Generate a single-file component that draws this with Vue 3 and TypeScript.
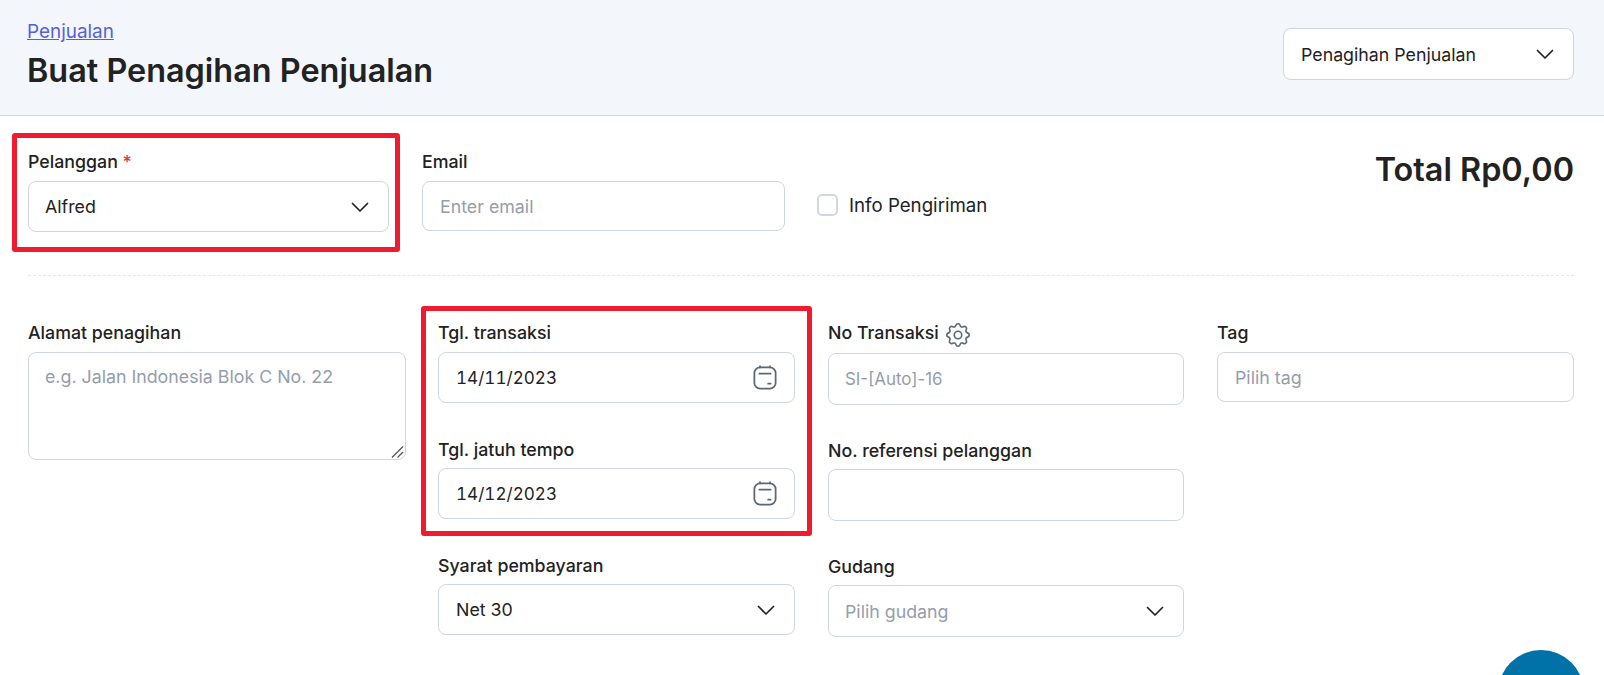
<script setup lang="ts">
const chevron = "M4.500 8.500l7.500 7.500 7.500-7.500";
</script>

<template>
  <div class="page">
    <header class="head">
      <div class="head-text">
        <a class="crumb" href="#">Penjualan</a>
        <h1 class="title">Buat Penagihan Penjualan</h1>
      </div>
      <div class="box doc-select">
        <span>Penagihan Penjualan</span>
        <svg class="chev" viewBox="0 0 24 24"><path :d="chevron" /></svg>
      </div>
    </header>

    <main class="content">
      <section class="top-row">
        <div class="field w-customer">
          <label class="lbl gap-10">Pelanggan <span class="req">*</span></label>
          <div class="box select h51">
            <span>Alfred</span>
            <svg class="chev" viewBox="0 0 24 24"><path :d="chevron" /></svg>
          </div>
        </div>
        <div class="field w-email">
          <label class="lbl gap-10">Email</label>
          <input class="box control h50" placeholder="Enter email" />
        </div>
        <label class="check"><span class="tick"></span>Info Pengiriman</label>
        <div class="total">Total Rp0,00</div>
      </section>

      <hr class="divider" />

      <section class="form-grid">
        <div class="col">
          <div class="field">
            <label class="lbl gap-9">Alamat penagihan</label>
            <textarea class="box area" placeholder="e.g. Jalan Indonesia Blok C No. 22"></textarea>
          </div>
        </div>

        <div class="col col-dates">
          <div class="field">
            <label class="lbl gap-9">Tgl. transaksi</label>
            <div class="box select h51">
              <span class="date">14/11/2023</span>
              <svg class="cal" viewBox="0 0 24 24">
                <rect x="3.5" y="3.5" width="17" height="17" rx="4.5" />
                <path d="M8 3.500V2.500M16 3.500V2.500M7.500 8.500h9M14.500 16.500h2" />
              </svg>
            </div>
          </div>
          <div class="field">
            <label class="lbl gap-8">Tgl. jatuh tempo</label>
            <div class="box select h51">
              <span class="date">14/12/2023</span>
              <svg class="cal" viewBox="0 0 24 24">
                <rect x="3.5" y="3.5" width="17" height="17" rx="4.5" />
                <path d="M8 3.500V2.500M16 3.500V2.500M7.500 8.500h9M14.500 16.500h2" />
              </svg>
            </div>
          </div>
          <div class="field">
            <label class="lbl gap-8">Syarat pembayaran</label>
            <div class="box select h51">
              <span>Net 30</span>
              <svg class="chev" viewBox="0 0 24 24"><path :d="chevron" /></svg>
            </div>
          </div>
        </div>

        <div class="col col-refs">
          <div class="field">
            <label class="lbl gap-10 with-icon">No Transaksi<svg class="gear" viewBox="0 0 24 24">
                <path d="M10.325 4.317c.426-1.756 2.924-1.756 3.350 0a1.724 1.724 0 0 0 2.573 1.066c1.543-.94 3.310.826 2.370 2.370a1.724 1.724 0 0 0 1.065 2.572c1.756.426 1.756 2.924 0 3.350a1.724 1.724 0 0 0-1.066 2.573c.94 1.543-.826 3.310-2.370 2.370a1.724 1.724 0 0 0-2.572 1.065c-.426 1.756-2.924 1.756-3.350 0a1.724 1.724 0 0 0-2.573-1.066c-1.543.94-3.310-.826-2.370-2.370a1.724 1.724 0 0 0-1.065-2.572c-1.756-.426-1.756-2.924 0-3.350a1.724 1.724 0 0 0 1.066-2.573c-.94-1.543.826-3.310 2.370-2.370 1 .608 2.296.07 2.572-1.065z" />
                <circle cx="12" cy="12" r="3" />
              </svg>
            </label>
            <input class="box control h52 code" placeholder="SI-[Auto]-16" />
          </div>
          <div class="field">
            <label class="lbl gap-8">No. referensi pelanggan</label>
            <input class="box control h52" />
          </div>
          <div class="field">
            <label class="lbl gap-8">Gudang</label>
            <div class="box select h52">
              <span class="muted">Pilih gudang</span>
              <svg class="chev" viewBox="0 0 24 24"><path :d="chevron" /></svg>
            </div>
          </div>
        </div>

        <div class="col">
          <div class="field">
            <label class="lbl gap-9">Tag</label>
            <input class="box control h50" placeholder="Pilih tag" />
          </div>
        </div>
      </section>
    </main>

    <div class="mark mark-customer"></div>
    <div class="mark mark-dates"></div>
    <div class="fab"></div>
  </div>
</template>

<style scoped>
.page {
  position: relative;
  height: 675px;
  overflow: hidden;
  background: #fff;
  color: #222;
  font-family: Inter, "Liberation Sans", sans-serif;
  font-size: 17.8px;
}
.head {
  display: flex;
  justify-content: space-between;
  align-items: flex-start;
  height: 116px;
  box-sizing: border-box;
  padding: 20px 30px 0 27px;
  background: #f3f6fb;
  border-bottom: 1px solid #d3d9e6;
}
.crumb {
  display: block;
  color: #5560e0;
  line-height: 24px;
  font-size: 18.9px;
}
.title {
  margin: 9px 0 0;
  font-size: 32.4px;
  line-height: 36px;
  font-weight: 600;
  color: #222;
}
.box {
  box-sizing: border-box;
  border: 1px solid #cfd5e1;
  border-radius: 8px;
  background: #fff;
  font: inherit;
  color: inherit;
}
.doc-select {
  width: 291px;
  height: 52px;
  margin-top: 8px;
  display: flex;
  align-items: center;
  justify-content: space-between;
  padding: 0 17px;
}
.content {
  padding: 35px 30px 0 28px;
}
.top-row {
  display: flex;
  align-items: flex-start;
}
.w-customer { width: 361px; margin-right: 33px; }
.w-email { width: 363px; margin-right: 32px; }
.field {
  display: flex;
  flex-direction: column;
}
.lbl {
  display: flex;
  align-items: center;
  box-sizing: border-box;
  height: 20px;
  font-weight: 500;
  white-space: pre;
}
.form-grid .lbl { padding-bottom: 2px; }
.with-icon { gap: 4px; }
.req { color: #e5383b; }
.gap-8 { margin-bottom: 8px; }
.gap-9 { margin-bottom: 9px; }
.gap-10 { margin-bottom: 10px; }
.h50 { height: 50px; }
.h51 { height: 51px; }
.h52 { height: 52px; }
.select {
  display: flex;
  align-items: center;
  justify-content: space-between;
  padding: 0 17px 0 16px;
}
.col-dates .select { padding-left: 17px; }
.date { font-variant-numeric: tabular-nums; font-size: 17.1px; }
.control {
  width: 100%;
  padding: 0 17px;
  outline: none;
}
.code { font-size: 16.9px; padding-left: 16px; }
.control::placeholder, .area::placeholder, .muted {
  color: #959dab;
  opacity: 1;
}
.area {
  width: 100%;
  height: 108px;
  padding: 13px 16px;
  outline: none;
  display: block;
}
.area::-webkit-resizer {
  background: url("data:image/svg+xml,%3Csvg xmlns='http://www.w3.org/2000/svg' width='15' height='15'%3E%3Cpath d='M2 13.500L13 2.500M7.500 13.500L13 8' stroke='%23555' stroke-width='1.300' fill='none'/%3E%3C/svg%3E") no-repeat;
}
.chev {
  width: 24px;
  height: 24px;
  margin-right: -1px;
  fill: none;
  stroke: #222;
  stroke-width: 1.7;
  stroke-linecap: round;
  stroke-linejoin: round;
}
.cal {
  width: 30px;
  height: 30px;
  margin-right: -3px;
  fill: none;
  stroke: #5d6675;
  stroke-width: 1.4;
  stroke-linecap: round;
}
.gear {
  flex: none;
  width: 30px;
  height: 30px;
  margin-top: 5px;
  fill: none;
  stroke: #5d6675;
  stroke-width: 1.300;
  stroke-linejoin: round;
}
.check {
  display: flex;
  align-items: center;
  gap: 11px;
  margin-top: 43px;
  height: 22px;
  font-size: 18.7px;
}
.tick {
  width: 21px;
  height: 22px;
  box-sizing: border-box;
  border: 2px solid #d3d7e2;
  border-radius: 5px;
  background: #fff;
}
.total {
  margin-left: auto;
  font-size: 32.4px;
  line-height: 36px;
  font-weight: 600;
  margin-top: 1px;
}
.divider {
  border: 0;
  border-top: 1px dashed #e4e7ee;
  margin: 43px 0 47px;
}
.form-grid {
  display: grid;
  grid-template-columns: 378px 356px 356px 357px;
  column-gap: 33px;
}
.col {
  display: flex;
  flex-direction: column;
}
.col-dates { gap: 37px; margin-left: -1px; }
.col-refs { gap: 36px; }
.mark {
  position: absolute;
  box-sizing: border-box;
  border: 5px solid #ee1c2e;
  border-radius: 3px;
  pointer-events: none;
}
.mark-customer { left: 12px; top: 133px; width: 388px; height: 119px; }
.mark-dates { left: 421px; top: 306px; width: 391px; height: 230px; }
.fab {
  position: absolute;
  left: 1498px;
  top: 650px;
  width: 86px;
  height: 86px;
  border-radius: 50%;
  background: #0072a8;
}
</style>

<style>
html, body { margin: 0; background: #fff; overflow: hidden; }
</style>
